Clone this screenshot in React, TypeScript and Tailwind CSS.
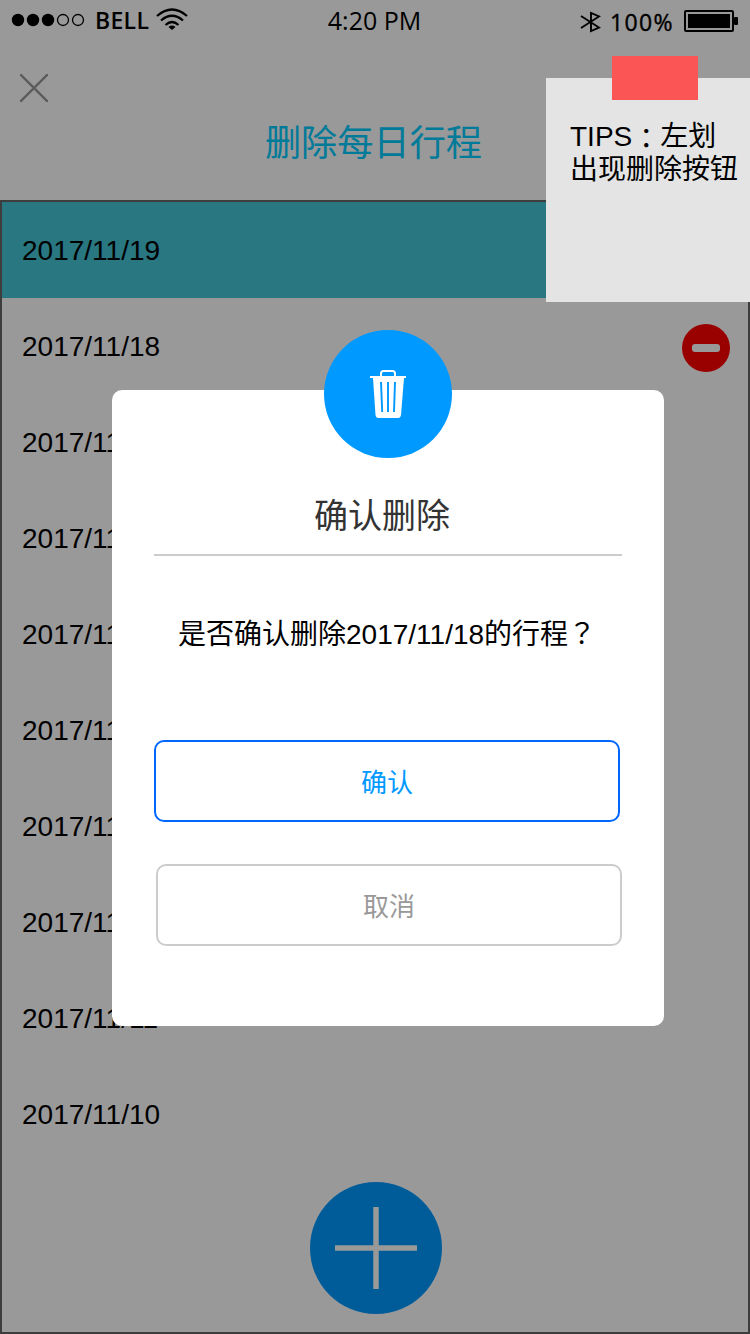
import React from "react";

const dates = [
  "2017/11/19",
  "2017/11/18",
  "2017/11/17",
  "2017/11/16",
  "2017/11/15",
  "2017/11/14",
  "2017/11/13",
  "2017/11/12",
  "2017/11/11",
  "2017/11/10",
];

function StatusBar() {
  return (
    <div className="flex h-10 items-center font-['Open_Sans','Noto_Sans',sans-serif] text-black">
      <div className="flex flex-1 items-center pl-[11px]">
        <svg width="75" height="16" viewBox="0 0 75 16">
          <circle cx="7" cy="8" r="6.2" />
          <circle cx="22" cy="8" r="6.2" />
          <circle cx="37" cy="8" r="6.2" />
          <circle cx="52" cy="8" r="5.5" fill="none" stroke="#000" strokeWidth="1.3" />
          <circle cx="67" cy="8" r="5.5" fill="none" stroke="#000" strokeWidth="1.3" />
        </svg>
        <span className="ml-[9px] w-[55px] text-[23px] leading-10 font-semibold tracking-[0.3px]">BELL</span>
        <svg className="ml-[5px]" width="34" height="24" viewBox="0 0 34 24" fill="none" stroke="#000" strokeWidth="2.2">
          <path d="M2 8 Q17 -5 32 8" />
          <path d="M6 12.500 Q17 3 28 12.500" />
          <path d="M10.500 17 Q17 11 23.500 17" />
          <path d="M17 22 L13.500 19 Q17 16.200 20.500 19Z" fill="#000" stroke="none" />
        </svg>
      </div>
      <span className="text-[25px] leading-10">4:20 PM</span>
      <div className="flex flex-1 items-center justify-end pr-3">
        <svg className="mt-1" width="21" height="22" viewBox="0 0 21 22" fill="none" stroke="#000" strokeWidth="1.9">
          <path d="M1 5 L19 16.500 L11 20 V2 L19 5.500 L1 17" />
        </svg>
        <span className="mt-[3px] ml-[9px] text-[23px] leading-10 font-medium tracking-[1.4px] [-webkit-text-stroke:0.4px_#000]">
          100%
        </span>
        <svg className="mt-0.5 ml-[10px]" width="54" height="22" viewBox="0 0 54 22">
          <rect x="1" y="1" width="48" height="20" rx="1" fill="none" stroke="#000" strokeWidth="2" />
          <rect x="4" y="4" width="42" height="14" />
          <rect x="50" y="7" width="4" height="8" rx="1" />
        </svg>
      </div>
    </div>
  );
}

function Page() {
  return (
    <div className="flex h-full flex-col bg-white">
      <StatusBar />
      <header className="flex h-40 shrink-0 flex-col px-5 pt-[34px]">
        <svg width="28" height="28" viewBox="0 0 28 28" stroke="#999" strokeWidth="2.4">
          <path d="M0 0 L28 28 M28 0 L0 28" />
        </svg>
        <h1 className="mt-4 -ml-[3px] text-center text-[36.2px] leading-[52px] text-[#00ccff]">删除每日行程</h1>
      </header>
      <main className="flex flex-1 flex-col border-2 border-[#666]">
        {dates.map((date, i) => (
          <div
            key={date}
            className={`flex h-24 shrink-0 items-center justify-between pt-0.5 pr-[18px] pl-5 text-[28px] ${i === 0 ? "bg-[#44c6d7]" : ""}`}
          >
            <span>{date}</span>
            {i === 1 && (
              <span className="mt-0.5 flex size-12 items-center justify-center rounded-full bg-[#ff0000]">
                <span className="h-2 w-7 rounded-[3px] bg-white" />
              </span>
            )}
          </div>
        ))}
        <div className="mt-5 ml-[308px] flex size-[132px] items-center justify-center rounded-full bg-[#0099ff]">
          <svg width="82" height="82" viewBox="0 0 82 82" stroke="#fff" strokeWidth="5.5">
            <path d="M41 0 V82 M0 41 H82" />
          </svg>
        </div>
      </main>
    </div>
  );
}

function Dialog() {
  return (
    <section className="absolute top-[390px] left-[112px] flex h-[636px] w-[552px] flex-col rounded-[10px] bg-white px-[42px]">
      <div className="-mt-[60px] flex size-32 items-center justify-center self-center rounded-full bg-[#0099ff]">
        <svg width="36" height="48" viewBox="0 0 36 48">
          <path d="M11 6 V3.500 Q11 1 13.500 1 H22.500 Q25 1 25 3.500 V6" fill="none" stroke="#fff" strokeWidth="2" />
          <path d="M0 6 H36 V8 H34 L31 45 Q30.500 48 28 48 H8.500 Q6 48 5.500 45 L3 8 H0Z" fill="#fff" />
          <path d="M11 12 L12.200 42 M18 12 V42 M25 12 L24 42" stroke="#0099ff" strokeWidth="1.9" />
        </svg>
      </div>
      <h2 className="mt-[33px] h-[65px] border-b-2 border-[#ccc] pr-[12px] text-center text-[34px] leading-[50px] text-[#333]">
        确认删除
      </h2>
      <p className="mt-14 h-10 pl-6 text-[28px] leading-10 whitespace-nowrap">
        是否确认删除2017/11/18的行程<span className="font-['Noto_Sans_CJK_TC',sans-serif]">？</span>
      </p>
      <button className="mt-[88px] h-[82px] w-[466px] rounded-[10px] border-2 border-[#0066ff] pt-1 text-[26px] text-[#0099ff]">
        确认
      </button>
      <button className="mt-[42px] ml-[2px] h-[82px] w-[466px] rounded-[10px] border-2 border-[#ccc] pt-1 text-[26px] text-[#999]">
        取消
      </button>
    </section>
  );
}

function Tip() {
  return (
    <aside className="absolute top-[78px] left-[546px] h-[224px] w-[204px] bg-[#e4e4e4] pt-[42px] pl-6 text-[28px] leading-[33px]">
      <div className="absolute -top-[22px] left-[66px] h-11 w-[86px] bg-[#fc5555]" />
      <p className="flex h-[33px] whitespace-nowrap">
        <span>TIPS</span>
        <span className="pt-px font-['Noto_Sans_CJK_TC',sans-serif] leading-8">：</span>
        <span>左划</span>
      </p>
      <p className="whitespace-nowrap">出现删除按钮</p>
    </aside>
  );
}

export default function App() {
  return (
    <div className="relative h-[1334px] w-[750px] overflow-hidden font-['Liberation_Sans','Noto_Sans_CJK_SC',sans-serif] text-black">
      <Page />
      <div className="absolute inset-0 bg-black/40" />
      <Dialog />
      <Tip />
    </div>
  );
}
